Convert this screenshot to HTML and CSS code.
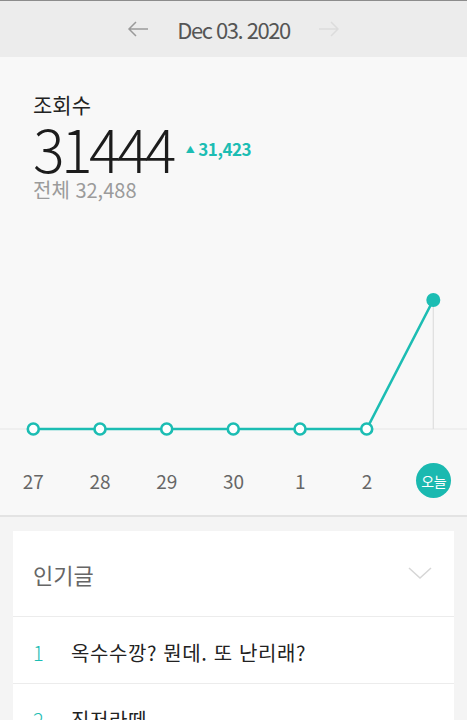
FILE: index.html
```html
<!DOCTYPE html>
<html lang="ko">
<head>
    <meta charset="UTF-8">
    <meta name="viewport" content="width=device-width, initial-scale=1.0">
    <title>통계</title>
    <link rel="stylesheet" href="styles.css">
</head>
<body>

<div id="date-bar">
    <svg class="arrow prev" width="22" height="16" viewBox="0 0 22 16">
        <path d="M21 8H2M9 1L2 8l7 7" fill="none" stroke="#9a9a9a" stroke-width="1.5"/>
    </svg>
    <span class="date">Dec 03. 2020</span>
    <svg class="arrow next" width="22" height="16" viewBox="0 0 22 16">
        <path d="M1 8h19M13 1l7 7-7 7" fill="none" stroke="#dcdcdc" stroke-width="1.5"/>
    </svg>
</div>

<div id="stats">
    <div class="stats-title">조회수</div>
    <div class="stats-count">
        <span class="count">31444</span>
        <span class="diff"><span class="tri">▲</span>31,423</span>
    </div>
    <div class="stats-total">전체 32,488</div>
</div>

<div id="chart">
    <svg class="chart-svg" width="467" height="244" viewBox="0 0 467 244">
        <line x1="0" y1="227" x2="467" y2="227" stroke="#e6e6e6" stroke-width="1"/>
        <line x1="433.3" y1="98" x2="433.3" y2="227" stroke="#dedede" stroke-width="1.2"/>
        <polyline points="33.3,227 100,227 166.7,227 233.3,227 300,227 366.7,227 433.3,98"
                  fill="none" stroke="#1cbdb3" stroke-width="2.6"/>
        <g fill="#fff" stroke="#1cbdb3" stroke-width="2.6">
            <circle cx="33.3" cy="227" r="5.5"/>
            <circle cx="100" cy="227" r="5.5"/>
            <circle cx="166.7" cy="227" r="5.5"/>
            <circle cx="233.3" cy="227" r="5.5"/>
            <circle cx="300" cy="227" r="5.5"/>
            <circle cx="366.7" cy="227" r="5.5"/>
        </g>
        <circle cx="433.3" cy="98" r="7" fill="#1cbdb3"/>
    </svg>
    <div class="days">
        <span>27</span>
        <span>28</span>
        <span>29</span>
        <span>30</span>
        <span>1</span>
        <span>2</span>
        <span><b class="today">오늘</b></span>
    </div>
</div>

<div id="popular">
    <div class="card">
        <div class="card-head">
            <span>인기글</span>
            <svg width="24" height="13" viewBox="0 0 24 13">
                <path d="M1 1l11 10L23 1" fill="none" stroke="#d6d6d6" stroke-width="1.5"/>
            </svg>
        </div>
        <div class="post">
            <span class="rank">1</span>
            <span class="title">옥수수깡? 뭔데. 또 난리래?</span>
        </div>
        <div class="post">
            <span class="rank">2</span>
            <span class="title">진저라떼</span>
        </div>
    </div>
</div>

</body>
</html>
```

FILE: styles.css
```css
body {
    margin: 0;
    font-family: "Noto Sans CJK KR", "Noto Sans", sans-serif;
    background: #f4f4f4;
    color: #222;
}

#date-bar {
    height: 56px;
    border-top: 1px solid #8c8c8c;
    background: #ececec;
    display: flex;
    align-items: center;
    justify-content: center;
    gap: 28px;
}

#date-bar .date {
    font-size: 22px;
    color: #555;
    letter-spacing: -1.5px;
    line-height: 1;
}

#date-bar .arrow {
    display: block;
}

#stats {
    background: #f8f8f8;
    padding: 33px 33px 0;
}

.stats-title {
    font-size: 21px;
    line-height: 28px;
}

.stats-count {
    display: flex;
    align-items: center;
    height: 60px;
}

.count {
    font-size: 59px;
    font-weight: 300;
    line-height: 60px;
    letter-spacing: -3.6px;
    color: #1c1c1c;
}

.diff {
    margin-left: 13px;
    font-size: 17px;
    font-weight: 700;
    color: #1cbdb3;
    letter-spacing: -0.5px;
}

.diff .tri {
    font-size: 9px;
    margin-right: 4px;
    position: relative;
    top: -3px;
}

.stats-total {
    font-size: 20px;
    line-height: 24px;
    color: #9b9b9b;
}

#chart {
    background: #f8f8f8;
    border-bottom: 2px solid #e3e3e3;
}

.chart-svg {
    display: block;
}

.days {
    display: grid;
    grid-template-columns: repeat(7, 1fr);
    height: 69px;
    align-items: center;
    text-align: center;
    font-size: 19px;
    color: #666;
}

.today {
    display: inline-flex;
    align-items: center;
    justify-content: center;
    width: 35px;
    height: 35px;
    border-radius: 50%;
    background: #1ab9b0;
    color: #fff;
    font-size: 14px;
    font-weight: 400;
    letter-spacing: -0.5px;
}

#popular {
    padding: 14px 13px 0;
}

.card {
    background: #fff;
}

.card-head {
    height: 85px;
    padding: 0 22px 0 20px;
    display: flex;
    align-items: center;
    justify-content: space-between;
    font-size: 22px;
    color: #666;
    border-bottom: 1px solid #ececec;
}

.post {
    box-sizing: border-box;
    height: 67px;
    padding: 4px 20px 0;
    display: flex;
    align-items: center;
    border-bottom: 1px solid #ececec;
    font-size: 20px;
}

.post .rank {
    width: 38px;
    color: #1cbdb3;
    font-weight: 300;
}

.post .title {
    color: #222;
    letter-spacing: 0.6px;
}
```
